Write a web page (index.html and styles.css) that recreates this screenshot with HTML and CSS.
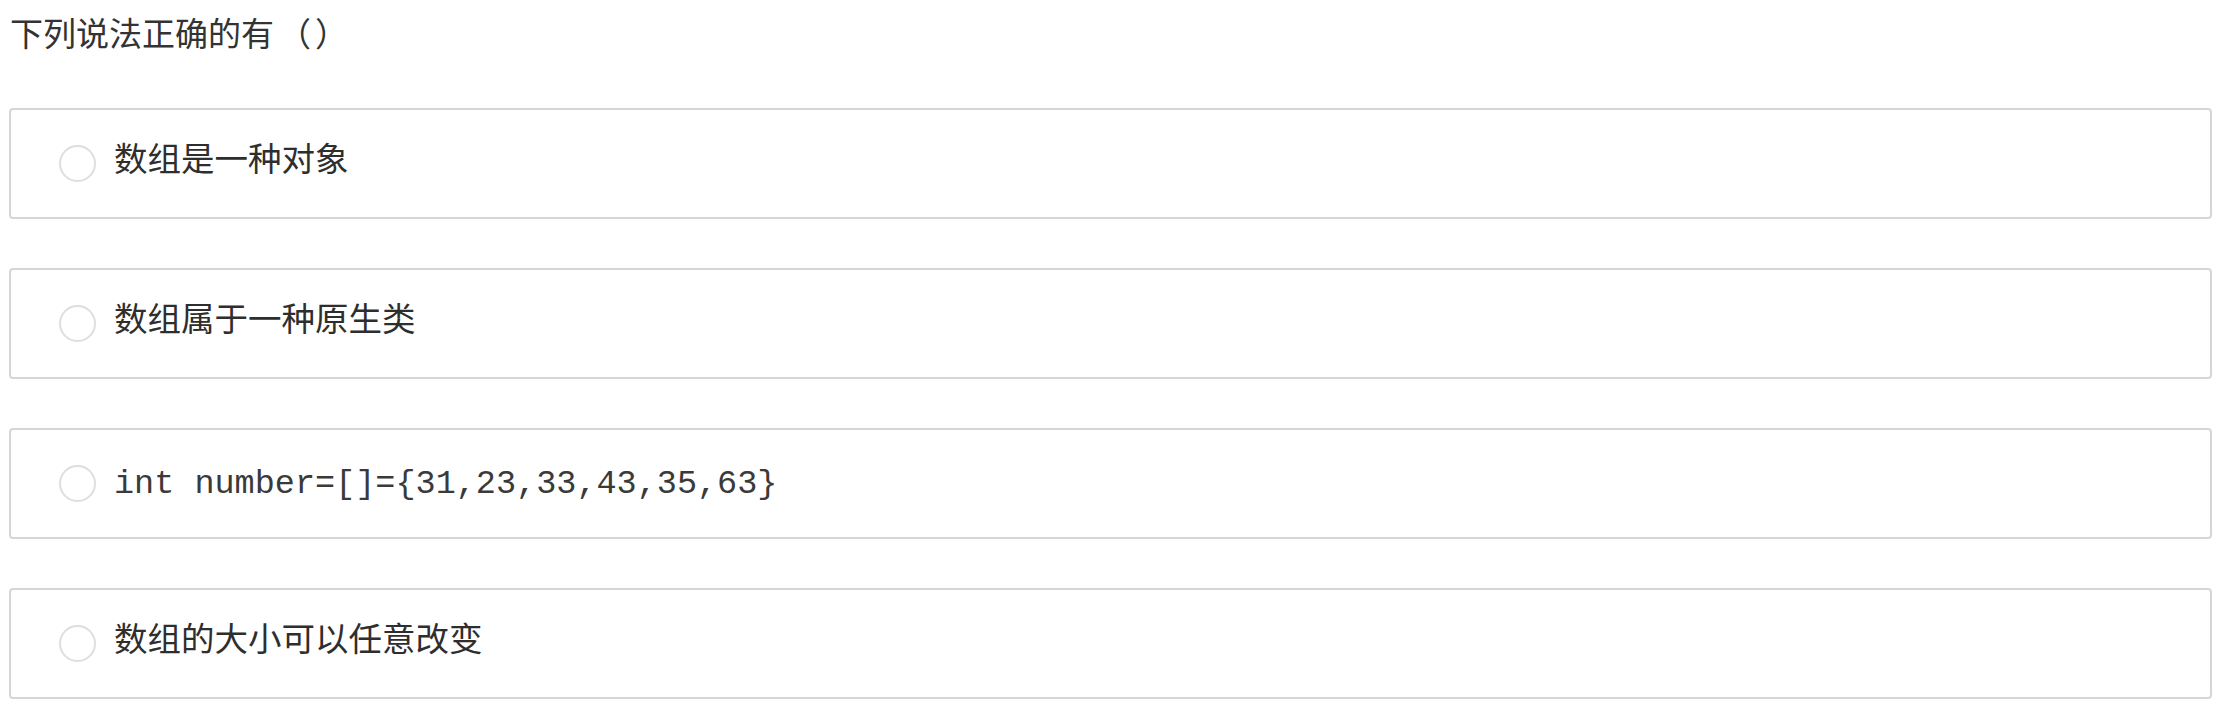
FILE: index.html
```html
<!DOCTYPE html>
<html lang="zh-CN">
<head>
<meta charset="utf-8">
<title>题目</title>
<link rel="stylesheet" href="styles.css">
</head>
<body>
<div class="question">
  <div class="title">下列说法正确的有<span class="paren">（）</span></div>
  <ul class="options">
    <li class="option"><span class="radio"></span><span class="label">数组是一种对象</span></li>
    <li class="option"><span class="radio"></span><span class="label">数组属于一种原生类</span></li>
    <li class="option"><span class="radio"></span><span class="label code">int number=[]={31,23,33,43,35,63}</span></li>
    <li class="option"><span class="radio"></span><span class="label">数组的大小可以任意改变</span></li>
  </ul>
</div>
</body>
</html>
```
FILE: styles.css
```css
html, body {
  margin: 0;
  padding: 0;
  background: #ffffff;
}
.question {
  padding: 8px 20px 0 9px;
  font-family: "Noto Sans CJK SC", "Noto Sans", sans-serif;
  color: #333333;
}
.title {
  font-size: 33px;
  line-height: 48px;
  padding-left: 1px;
  margin-bottom: 52px;
}
.paren {
  letter-spacing: 4px;
  padding-left: 4px;
}
.options {
  list-style: none;
  margin: 0;
  padding: 0;
}
.option {
  box-sizing: border-box;
  height: 111px;
  border: 2px solid #d6d6d6;
  border-radius: 4px;
  margin-bottom: 49px;
  display: flex;
  align-items: center;
  padding-left: 48px;
}
.radio {
  box-sizing: border-box;
  width: 37px;
  height: 37px;
  border: 2px solid #dedede;
  border-radius: 50%;
  flex: none;
  margin-right: 18px;
}
.label {
  font-size: 33.5px;
  line-height: 40px;
  color: #2e2e2e;
  padding-bottom: 14px;
}
.label.code {
  font-family: "Liberation Mono", monospace;
  color: #3a3a3a;
  padding-bottom: 0;
}
```
